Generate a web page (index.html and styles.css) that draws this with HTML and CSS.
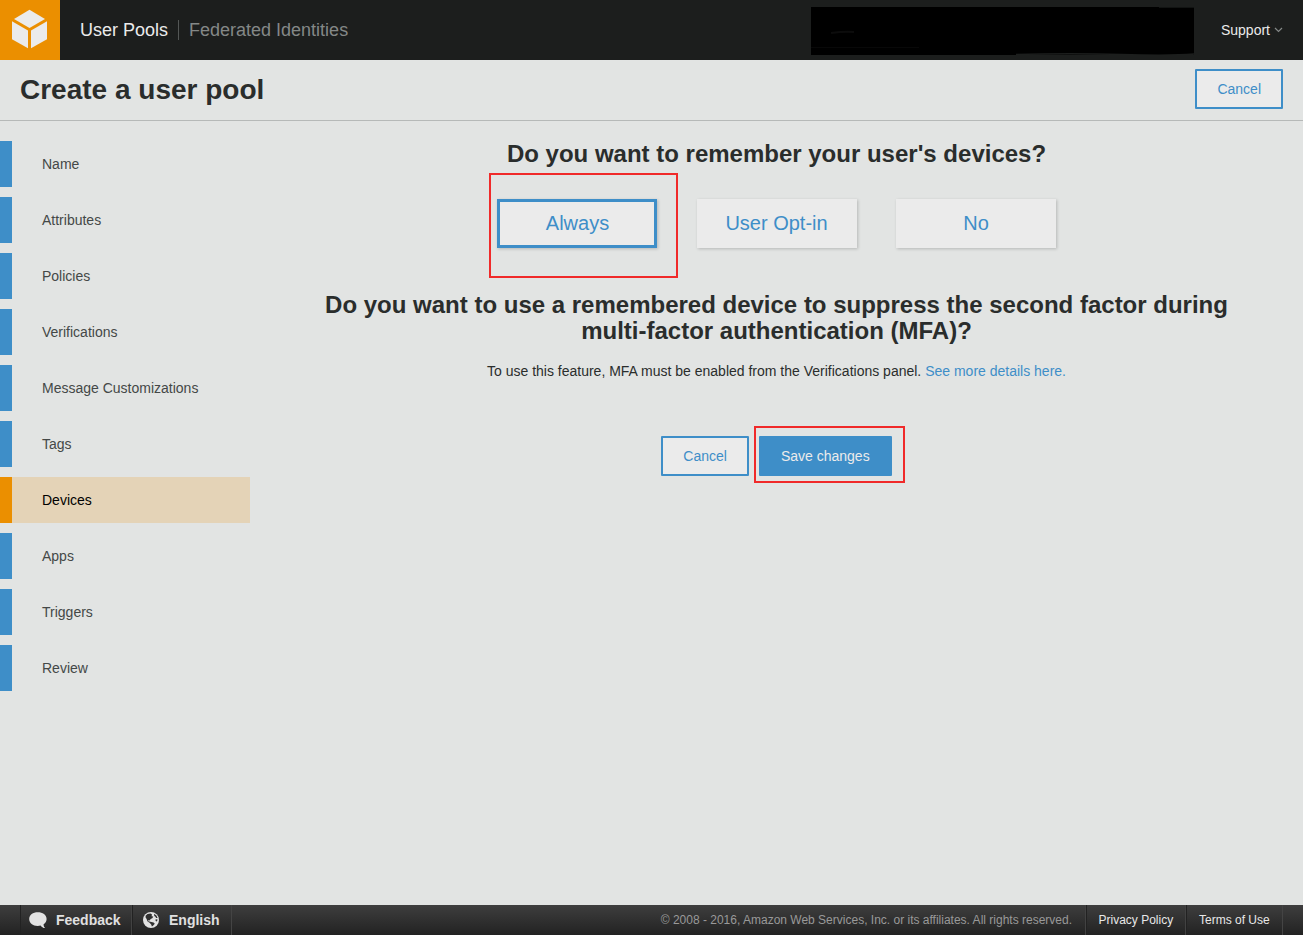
FILE: index.html
```html
<!DOCTYPE html>
<html lang="en">
<head>
<meta charset="utf-8">
<title>Create a user pool</title>
<link rel="stylesheet" href="styles.css">
</head>
<body>
<header class="topbar">
  <a class="logo"><svg width="60" height="60" viewBox="0 0 60 60"><g fill="#ebebeb"><path d="M29.5 9.8 45 19 29.5 28 14 19Z"/><path d="M12 21.3 28 30.6V48.2L12 39.2Z"/><path d="M47 21.3 31 30.6V48.2L47 39.2Z"/></g></svg></a>
  <nav class="tabs"><a class="tab tab-on">User Pools</a><a class="tab">Federated Identities</a></nav>
  <div class="account"><svg width="383" height="48"><g fill="none" stroke="#1c1e1d"><path d="M348 .5h35" stroke="#121413"/><path d="M20 26Q34 24 43 25" stroke="#0c0c0c" stroke-width="2"/><path d="M0 40.500h108" stroke="#080808"/><path d="M205 47.500Q260 46 310 47.500T383 47" stroke-width="1.500"/></g></svg></div>
  <a class="support">Support<svg width="9" height="6" viewBox="0 0 9 6"><path d="M1 1l3.500 3.500L8 1" fill="none" stroke="#858988" stroke-width="1.200"/></svg></a>
</header>
<div class="titlebar"><h1>Create a user pool</h1><button class="btn">Cancel</button></div>
<div class="body">
  <nav class="steps">
    <a class="step">Name</a>
    <a class="step">Attributes</a>
    <a class="step">Policies</a>
    <a class="step">Verifications</a>
    <a class="step">Message Customizations</a>
    <a class="step">Tags</a>
    <a class="step step-on">Devices</a>
    <a class="step">Apps</a>
    <a class="step">Triggers</a>
    <a class="step">Review</a>
  </nav>
  <main class="content">
    <h2>Do you want to remember your user's devices?</h2>
    <div class="choices">
      <div class="marked"><button class="choice choice-on">Always</button><span class="mark mark-choice"></span></div>
      <button class="choice">User Opt-in</button>
      <button class="choice">No</button>
    </div>
    <h2 class="second">Do you want to use a remembered device to suppress the second factor during<br>multi-factor authentication (MFA)?</h2>
    <p class="note">To use this feature, MFA must be enabled from the Verifications panel. <a class="link">See more details here.</a></p>
    <div class="actions">
      <button class="btn">Cancel</button>
      <div class="marked"><button class="btn btn-primary">Save changes</button><span class="mark mark-save"></span></div>
    </div>
  </main>
</div>
<footer class="footer">
  <a class="foot foot-feedback"><svg width="18" height="17" viewBox="0 0 18 17"><path d="M8.800.3C4 .3.200 3 .200 7s3.600 6.900 8.500 6.900c1 0 2-.1 2.900-.4.900 1.500 2.500 2.600 4.500 2.600-1-1-1.600-2.400-1.500-3.900C16.500 11 17.600 9 17.600 7 17.600 3 13.600.3 8.800.3Z" fill="#e3e3e3"/></svg>Feedback</a>
  <a class="foot foot-lang"><svg width="16" height="16" viewBox="0 0 16 16"><circle cx="8" cy="8" r="8" fill="#e3e3e3"/><path d="M2.600 3.800 4.500 2 7.500 1.600 9 2.600 8.600 4.300 10.300 4.600 9.300 6.200 7.600 7 6.800 8.600 5.400 8 5.300 9.200 7.400 9.800 10.600 10.600 11.800 11.800 10 13.800 8.900 14.600 8.200 12.400 6.600 10.800 4.600 9.400 3.600 7 2.600 5.500ZM11 1.800 13.400 3.400 14.600 6 13.200 6 12.200 4.600 11.300 4ZM12.600 7.300 14.600 7.600 13.900 9.600 12.600 9Z" fill="#303030"/></svg>English</a>
  <span class="copyright">© 2008 - 2016, Amazon Web Services, Inc. or its affiliates. All rights reserved.</span>
  <a class="foot-link foot-privacy">Privacy Policy</a>
  <a class="foot-link foot-terms">Terms of Use</a>
</footer>
</body>
</html>
```
FILE: styles.css
```css
* { box-sizing: border-box; }
body {
  margin: 0;
  height: 935px;
  display: flex;
  flex-direction: column;
  overflow: hidden;
  background: #e2e4e3;
  color: #2a2d2c;
  font: 14px/20px "Liberation Sans", Arial, sans-serif;
}
h1, h2, p { margin: 0; }
button { font-family: inherit; }
svg { display: block; flex: none; }

.topbar { display: flex; align-items: center; height: 60px; background: #1c1e1d; }
.logo { width: 60px; height: 60px; background: #eb8f00; }
.tabs { display: flex; margin-left: 20px; font-size: 18px; }
.tab { color: #848887; white-space: nowrap; }
.tab-on { color: #ebebeb; padding-right: 10px; margin-right: 10px; border-right: 1px solid #545756; }
.account { width: 383px; height: 48px; margin: 2px 27px 0 auto; background: #000; }
.support { display: flex; align-items: center; gap: 4px; margin-right: 20px; color: #ebebeb; }

.titlebar {
  display: flex;
  align-items: center;
  justify-content: space-between;
  height: 61px;
  padding: 0 20px 2px;
  border-bottom: 1px solid #b6b9b8;
}
h1 { padding-top: 2px; font-size: 28px; line-height: 32px; }
.btn {
  display: block;
  height: 40px;
  padding: 0 20px;
  border: 2px solid #3e8ec8;
  border-radius: 1px;
  background: #ebebeb;
  color: #3e8ec8;
  font-size: 14px;
}
.btn-primary { background: #3e8ec8; color: #ebebeb; }

.body { display: flex; flex: 1; }
.steps { display: flex; flex-direction: column; gap: 10px; width: 250px; padding-top: 20px; }
.step { height: 46px; padding-left: 30px; border-left: 12px solid #3e8ec8; color: #444847; line-height: 46px; }
.step-on { border-color: #eb8f00; background: #e4d3b7; color: #000; }

.content { flex: 1; display: flex; flex-direction: column; align-items: center; padding-top: 20px; text-align: center; }
h2 { font-size: 24px; line-height: 26px; }
.choices { display: flex; gap: 39.5px; margin-top: 32px; }
.choice {
  display: block;
  width: 160px;
  height: 49px;
  padding: 0;
  border: 0;
  background: #ebebeb;
  color: #3e8ec8;
  font-size: 20px;
  box-shadow: 1px 1px 3px rgba(0, 0, 0, .2);
}
.choice-on { border: 3px solid #3e8ec8; padding-left: 1px; }
.marked { position: relative; }
.mark { position: absolute; border: 2px solid #f02a2a; pointer-events: none; }
.mark-choice { left: -8px; top: -26px; width: 189px; height: 105px; }
.mark-save { left: -5px; top: -10px; width: 151px; height: 57px; }
.second { margin-top: 44px; }
.note { margin-top: 17px; }
.link { color: #3e8ec8; }
.actions { display: flex; gap: 10px; margin-top: 55px; }

.footer {
  display: flex;
  height: 30px;
  padding-left: 20px;
  background: linear-gradient(#3e3e3e, #222);
  color: #999;
  font-size: 12px;
  line-height: 30px;
}
.foot { display: flex; align-items: center; color: #e0e0e0; font-size: 14px; font-weight: bold; border-left: 1px solid #222; }
.foot-feedback { width: 112px; padding-left: 8px; gap: 9px; }
.foot-lang { width: 100px; padding-left: 10px; gap: 10px; border-right: 1px solid #444; box-shadow: -1px 0 #424242; }
.copyright { margin-left: auto; margin-right: 13.5px; }
.foot-link { color: #e8e8e8; padding-left: 12px; border-left: 1px solid #222; box-shadow: -1px 0 #424242; }
.foot-privacy { width: 100.5px; }
.foot-terms { width: 97px; margin-right: 20px; border-right: 1px solid #444; }
```
